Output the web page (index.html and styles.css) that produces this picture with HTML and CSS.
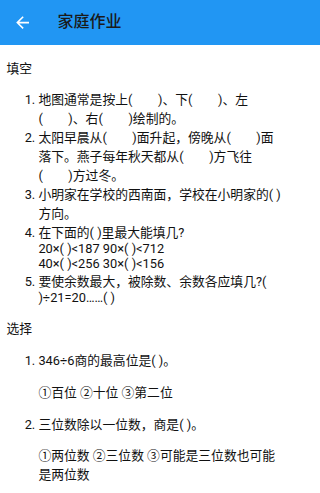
FILE: index.html
```html
<!DOCTYPE html>
<html lang="zh-CN">
<head>
<meta charset="utf-8">
<meta name="viewport" content="width=device-width, initial-scale=1">
<title>家庭作业</title>
<link rel="stylesheet" href="styles.css">
</head>
<body>
<header class="toolbar">
  <svg class="back" viewBox="0 0 24 24" width="19.2" height="19.2" aria-hidden="true">
    <path d="M20 11H7.83l5.59-5.59L12 4l-8 8 8 8 1.41-1.41L7.83 13H20v-2z" fill="#fff"/>
  </svg>
  <h1 class="title">家庭作业</h1>
</header>
<main class="content">
  <p class="section">填空</p>
  <ol class="list">
    <li>地图通常是按上(　　)、下(　　)、左(　　)、右(　　)绘制的。</li>
    <li>太阳早晨从(　　)面升起，傍晚从(　　)面落下。燕子每年秋天都从(　　)方飞往(　　)方过冬。</li>
    <li>小明家在学校的西南面，学校在小明家的( )方向。</li>
    <li>在下面的( )里最大能填几?<br>20×( )&lt;187 90×( )&lt;712<br>40×( )&lt;256 30×( )&lt;156</li>
    <li>要使余数最大，被除数、余数各应填几?( )÷21=20……( )</li>
  </ol>
  <p class="section">选择</p>
  <ol class="list">
    <li>346÷6商的最高位是( )。<p class="opts">①百位 ②十位 ③第二位</p></li>
    <li>三位数除以一位数，商是( )。<p class="opts">①两位数 ②三位数 ③可能是三位数也可能是两位数</p></li>
  </ol>
</main>
</body>
</html>
```

FILE: styles.css
```css
html, body {
  margin: 0;
  padding: 0;
  background: #fff;
}
body {
  font-family: Roboto, "Noto Sans CJK SC", sans-serif;
  color: #111;
}
.toolbar {
  height: 44.8px;
  background: #2196f3;
  display: flex;
  align-items: center;
  padding-left: 12.8px;
  box-sizing: border-box;
}
.back {
  display: block;
  flex: none;
}
.title {
  margin: 0 0 0 25.6px;
  font-size: 16px;
  font-weight: 500;
  color: #1a1a1a;
  line-height: 1;
}
.content {
  width: 288px;
  box-sizing: border-box;
  padding: 0 6.4px;
  font-size: 12.8px;
  line-height: normal;
}
.section {
  margin: 12.8px 0;
}
.list {
  margin: 12.8px 0;
  padding-left: 32px;
}
.opts {
  margin: 12.8px 0;
}
```
